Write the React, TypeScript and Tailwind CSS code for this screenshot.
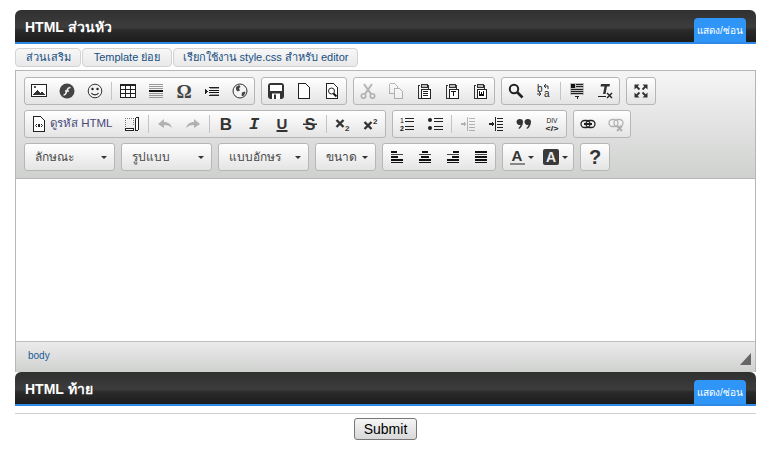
import React from "react";

const I = ({ children, off }: { children: React.ReactNode; off?: boolean }) => (
  <svg width="16" height="16" viewBox="0 0 16 16" className={off ? "opacity-30" : ""} shapeRendering="crispEdges">
    {children}
  </svg>
);

const Btn = ({ children, w = "w-[28px]" }: { children: React.ReactNode; w?: string }) => (
  <div className={`${w} h-[26px] flex items-center justify-center`}>{children}</div>
);

const Sep = () => (
  <div className="w-[5px] h-[26px] flex items-center justify-center">
    <div className="w-px h-[18px] bg-[#c4c4c4]" />
  </div>
);

const Group = ({ children }: { children: React.ReactNode }) => (
  <div className="flex h-[28px] border border-[#b6b6b6] rounded-[3px] bg-gradient-to-b from-[#ffffff] to-[#e4e4e4]">
    {children}
  </div>
);

const Caret = () => <span className="w-0 h-0 border-l-[3px] border-r-[3px] border-t-[3px] border-l-transparent border-r-transparent border-t-[#333]" />;

const Combo = ({ label, w }: { label: string; w: string }) => (
  <div className={`${w} flex items-center justify-between h-[28px] pl-[10px] pr-[7px] border border-[#b6b6b6] rounded-[3px] bg-gradient-to-b from-[#ffffff] to-[#e4e4e4]`}>
    <span className="text-[12px] text-[#484848]">{label}</span>
    <Caret />
  </div>
);

const Header = ({ title }: { title: string }) => (
  <div className="relative h-[34px] rounded-t-[6px] border-b-2 border-[#2e8ae6] bg-[linear-gradient(#303030_0%,#3c3c3c_50%,#3a3a3a_56%,#2b2b2b_62%,#1c1c1c_100%)] pl-[10px] flex items-center pt-[2px]">
    <span className="text-[14px] font-bold text-white">{title}</span>
    <div className="absolute right-[10px] bottom-0 w-[52px] h-[24px] bg-[#2f96f8] rounded-t-[4px] flex items-center justify-center text-[10px] text-white">
      แสดง/ซ่อน
    </div>
  </div>
);

const Tab = ({ w, children }: { w: string; children: React.ReactNode }) => (
  <div className={`${w} h-[19px] border border-[#d2d2d2] rounded-[4px] bg-gradient-to-b from-[#f7f7f7] to-[#e9e9e9] flex items-center justify-center text-[11px] text-[#174f82]`}>
    {children}
  </div>
);

const Lines = ({ ys, x = 2, w = 12 }: { ys: number[]; x?: number; w?: number }) => (
  <>
    {ys.map((y) => (
      <rect key={y} x={x} y={y} width={w} height={1} fill="#222" />
    ))}
  </>
);

const Clip = ({ children }: { children: React.ReactNode }) => (
  <>
    <path d="M4 2.500H2.500v12.500H5M5.500 1.500h5M11 2.500h1.500v3" fill="none" stroke="#333" />
    <rect x="5" y="1" width="6" height="3" fill="#bbb" stroke="#333" />
    <rect x="5" y="6" width="9" height="9" fill="#fff" stroke="#222" />
    {children}
  </>
);

const Txt = ({ children, cls }: { children: React.ReactNode; cls: string }) => <span className={cls}>{children}</span>;

const AlignRows = ({ a, b, c }: { a: [number, number]; b: [number, number]; c: [number, number] }) => (
  <I>
    <rect x={a[0]} y="2" width={a[1]} height="2" fill="#111" />
    <rect x="2" y="5" width="12" height="1" fill="#444" />
    <rect x={b[0]} y="7" width={b[1]} height="2" fill="#111" />
    <rect x="2" y="10" width="12" height="2" fill="#111" />
    <rect x={c[0]} y="13" width={c[1]} height="1" fill="#111" />
  </I>
);

export default function App() {
  return (
    <div className="w-[771px] h-[454px] bg-white overflow-hidden pt-[10px] px-[15px] font-['Liberation_Sans','Noto_Sans',sans-serif]">
      <div className="w-[741px]">
        <Header title="HTML ส่วนหัว" />
        <div className="flex gap-px mt-[4px] mb-[3px]">
          <Tab w="w-[66px]">ส่วนเสริม</Tab>
          <Tab w="w-[90px]">Template ย่อย</Tab>
          <Tab w="w-[185px]">เรียกใช้งาน style.css สำหรับ editor</Tab>
        </div>

        <div className="border border-[#b6b6b6] border-b-0">
          <div className="h-[108px] border-b border-[#b6b6b6] bg-gradient-to-b from-[#f5f5f5] to-[#cfd1cf] pt-[6px] pl-[8px] flex flex-col gap-[5px]">
            <div className="flex gap-[6px]">
              <Group>
                <Btn><I><rect x="0.5" y="1.500" width="15" height="12" fill="#fff" stroke="#222" /><path d="M2 12l4-5 3 3 2-2 3 4z" fill="#333" /><rect x="3" y="3" width="2" height="2" fill="#555" /></I></Btn>
                <Btn><svg width="16" height="16" viewBox="0 0 16 16"><circle cx="8" cy="8" r="7.500" fill="#444" /><path d="M4.500 12c2.500 0 2.500-1.500 3.500-4.500 0.500-2 1.500-3 3.500-3M6 8h4" fill="none" stroke="#eee" strokeWidth="1.500" /></svg></Btn>
                <Btn><svg width="16" height="16" viewBox="0 0 16 16"><circle cx="8" cy="8" r="6.800" fill="#f2f2f2" stroke="#333" /><circle cx="5.500" cy="6" r="1.200" fill="#222" /><circle cx="10.500" cy="6" r="1.200" fill="#222" /><path d="M4.500 10c1.500 2.500 5.500 2.500 7 0" fill="none" stroke="#222" strokeWidth="1.200" /></svg></Btn>
                <Sep />
                <Btn><I><rect x="0.5" y="1.500" width="15" height="13" fill="#fff" stroke="#222" /><rect x="0" y="1" width="16" height="2" fill="#222" /><path d="M5.500 3v11M10.500 3v11M1 6.500h14M1 10.500h14" stroke="#222" fill="none" /></I></Btn>
                <Btn><I><rect x="1" y="7" width="14" height="2" fill="#111" /><path d="M1 1.500h14M1 3.500h14M1 5.500h14M1 10.500h14M1 12.500h14M1 14.500h14" stroke="#999" fill="none" /></I></Btn>
                <Btn><Txt cls="font-['Liberation_Serif'] font-bold text-[19px] leading-none text-[#444]">Ω</Txt></Btn>
                <Btn><I><path d="M1 6l3 2.500L1 11z" fill="#222" /><Lines ys={[4, 12]} x={5} w={10} /><rect x="5" y="7" width="10" height="1" fill="#111" /><rect x="5" y="9" width="10" height="1" fill="#111" /><rect x="6" y="5" width="9" height="1" fill="#999" /><rect x="6" y="11" width="9" height="1" fill="#999" /></I></Btn>
                <Btn><svg width="16" height="16" viewBox="0 0 16 16"><circle cx="8" cy="8" r="7" fill="#f4f4f4" stroke="#333" /><path d="M4 4l3-2 1.500 1.500L7 5.500l1 2-2.500 1-1.500-2zM10 9.500l3-1 .5 1.500-2.500 3.500-1.500-1z" fill="#444" /></svg></Btn>
              </Group>
              <Group>
                <Btn><svg width="16" height="16" viewBox="0 0 16 16"><path d="M0 3a3 3 0 0 1 3-3h10a3 3 0 0 1 3 3v10a3 3 0 0 1-3 3H3a3 3 0 0 1-3-3z" fill="#333" /><rect x="2" y="2" width="12" height="6" fill="#fff" /><rect x="4" y="10.500" width="8" height="5.500" fill="#fff" /><rect x="6" y="11.500" width="2" height="4.500" fill="#333" /></svg></Btn>
                <Btn><I><path d="M2.500 0.500h7l4 4v11h-11z" fill="#fff" stroke="#222" /></I></Btn>
                <Btn><I><path d="M2.500 0.500h7l4 4v11h-11z" fill="#fff" stroke="#222" /><circle cx="7.500" cy="8" r="3" fill="#fff" stroke="#222" shapeRendering="auto" /><path d="M9.500 10.500l3 3" stroke="#111" strokeWidth="2" shapeRendering="auto" /></I></Btn>
              </Group>
              <Group>
                <Btn><svg width="16" height="16" viewBox="0 0 16 16" className="opacity-30"><path d="M4 1l7 10M12 1l-7 10" stroke="#222" strokeWidth="2" /><circle cx="3.500" cy="13" r="2.200" fill="none" stroke="#222" strokeWidth="1.500" /><circle cx="12.500" cy="13" r="2.200" fill="none" stroke="#222" strokeWidth="1.500" /></svg></Btn>
                <Btn><I off><path d="M1.500 0.500h5l3 3v3M1.500 0.500v10h4" fill="none" stroke="#222" /><path d="M6.500 5.500h5l3 3v7h-8z" fill="#fff" stroke="#222" /></I></Btn>
                <Btn><I><Clip><Lines ys={[8, 10, 12]} x={7} w={5} /></Clip></I></Btn>
                <Btn><I><Clip><path d="M7 8h5v1H10v4H9V9H7z" fill="#111" /></Clip></I></Btn>
                <Btn><I><Clip><path d="M7 8h1v3h1V9h1v2h1V8h1v5H7z" fill="#111" /></Clip></I></Btn>
              </Group>
              <Group>
                <Btn><svg width="16" height="16" viewBox="0 0 16 16"><circle cx="6" cy="6" r="4.200" fill="none" stroke="#222" strokeWidth="2" /><path d="M9 9l5.500 5.500" stroke="#222" strokeWidth="2.600" /></svg></Btn>
                <Btn><svg width="16" height="16" viewBox="0 0 16 16"><text x="1" y="9" fontSize="10" fontFamily="Liberation Sans" fill="#222">b</text><text x="8" y="14" fontSize="10" fontFamily="Liberation Sans" fill="#222">a</text><path d="M8 3h4v3M8 3l2-2M8 3l2 2M1 11h4M5 11l-2-2M5 11l-2 2" fill="none" stroke="#333" /></svg></Btn>
                <Sep />
                <Btn><I><rect x="1" y="0" width="14" height="12" fill="#bdbdbd" /><rect x="2" y="1" width="4" height="4" fill="#111" /><rect x="7" y="1" width="7" height="1" fill="#222" /><rect x="7" y="3" width="7" height="1" fill="#222" /><Lines ys={[6, 8, 10]} x={2} w={12} /><path d="M6 13h4v1H8.500v2h-1v-2H6z" fill="#222" /></I></Btn>
                <Btn><svg width="16" height="16" viewBox="0 0 16 16"><path d="M4 1h9l-.5 2.500H10L8.500 11H6l1.500-7.500H3.500z" fill="#333" /><rect x="1" y="13" width="8" height="1" fill="#222" /><path d="M10 10l5 5M15 10l-5 5" stroke="#222" strokeWidth="1.400" /></svg></Btn>
              </Group>
              <Group>
                <Btn><svg width="16" height="16" viewBox="0 0 16 16"><path d="M1.500 1.500h5l-5 5zM14.500 1.500v5l-5-5zM1.500 14.500v-5l5 5zM14.500 14.500h-5l5-5z" fill="#333" /><path d="M3 3l3.500 3.500M13 3L9.500 6.500M3 13l3.500-3.500M13 13L9.500 9.500" stroke="#333" strokeWidth="1.800" /></svg></Btn>
              </Group>
            </div>

            <div className="flex gap-[6px]">
              <Group>
                <div className="w-[93px] h-[26px] flex items-center pl-[6px] gap-[3px]">
                  <I><path d="M2.500 0.500h7l4 4v11h-11z" fill="#fff" stroke="#222" /><path d="M6 8L4.500 9.500 6 11M10 8l1.500 1.500L10 11" stroke="#222" fill="none" shapeRendering="auto" /><rect x="7" y="8" width="2" height="3" fill="#222" /></I>
                  <span className="text-[11.5px] text-[#484878]">ดูรหัส HTML</span>
                </div>
                <Btn><I><path d="M1 2h9M1 2v10M9 2v7" stroke="#777" strokeDasharray="1 1" fill="none" /><rect x="1.500" y="12.500" width="8" height="2" rx="1" fill="#fff" stroke="#222" /><rect x="11.500" y="1.500" width="3" height="13" rx="1.500" fill="#fff" stroke="#222" /></I></Btn>
                <Sep />
                <Btn><svg width="16" height="16" viewBox="0 0 16 16" className="opacity-30"><path d="M1 8l6-5v3c4 0 7 2 8 6-2-2-4-3-8-3v3z" fill="#222" /></svg></Btn>
                <Btn><svg width="16" height="16" viewBox="0 0 16 16" className="opacity-30"><path d="M15 8L9 3v3C5 6 2 8 1 12c2-2 4-3 8-3v3z" fill="#222" /></svg></Btn>
                <Sep />
                <Btn><Txt cls="font-bold text-[17px] text-[#333] leading-none">B</Txt></Btn>
                <Btn><Txt cls="font-['Liberation_Mono'] font-bold italic text-[17px] text-[#333] leading-none">I</Txt></Btn>
                <Btn>
                  <svg width="16" height="16" viewBox="0 0 16 16">
                    <text x="8" y="12.500" textAnchor="middle" fontSize="15" fontWeight="bold" fontFamily="Liberation Sans" fill="#333">U</text>
                    <rect x="2.500" y="14" width="11" height="2" fill="#333" />
                  </svg>
                </Btn>
                <Btn>
                  <svg width="16" height="16" viewBox="0 0 16 16">
                    <text x="8" y="14" textAnchor="middle" fontSize="16" fontWeight="bold" fontFamily="Liberation Sans" fill="#333">S</text>
                    <rect x="1" y="7.500" width="14" height="1.500" fill="#333" />
                  </svg>
                </Btn>
                <Sep />
                <Btn><svg width="16" height="16" viewBox="0 0 16 16"><path d="M1.500 4l7 7M8.500 4l-7 7" stroke="#333" strokeWidth="2.400" /><text x="10" y="15" fontSize="8" fontWeight="bold" fontFamily="Liberation Sans" fill="#333">2</text></svg></Btn>
                <Btn><svg width="16" height="16" viewBox="0 0 16 16"><path d="M1.500 6l7 7M8.500 6l-7 7" stroke="#333" strokeWidth="2.400" /><text x="10" y="8" fontSize="8" fontWeight="bold" fontFamily="Liberation Sans" fill="#333">2</text></svg></Btn>
              </Group>
              <Group>
                <Btn><svg width="16" height="16" viewBox="0 0 16 16"><text x="1" y="7" fontSize="7" fontFamily="Liberation Sans" fill="#111">1</text><text x="1" y="15" fontSize="7" fontWeight="bold" fontFamily="Liberation Sans" fill="#111">2</text><Lines ys={[2, 5, 10, 13]} x={6} w={9} /></svg></Btn>
                <Btn><svg width="16" height="16" viewBox="0 0 16 16"><circle cx="3" cy="4" r="2" fill="#222" /><circle cx="3" cy="12" r="2" fill="#222" /><Lines ys={[2, 5, 10, 13]} x={7} w={9} /></svg></Btn>
                <Sep />
                <Btn><I off><Lines ys={[2, 5, 8, 11, 14]} x={9} w={6} /><rect x="7" y="1" width="1" height="14" fill="#222" /><path d="M1 7h3V5l2 3-2 3V9H1z" fill="#222" /></I></Btn>
                <Btn><I><Lines ys={[2, 5, 8, 11, 14]} x={9} w={6} /><rect x="7" y="1" width="1" height="14" fill="#222" /><path d="M1 7h3V5l2 3-2 3V9H1z" fill="#222" /></I></Btn>
                <Btn><svg width="16" height="16" viewBox="0 0 16 16"><path d="M4 3a3 3 0 0 1 3 3c0 3-2 6-4 7l-.5-1c1-.6 1.800-2 2-3.200A3 3 0 1 1 4 3zM12 3a3 3 0 0 1 3 3c0 3-2 6-4 7l-.5-1c1-.6 1.800-2 2-3.200A3 3 0 1 1 12 3z" fill="#333" /></svg></Btn>
                <Btn><svg width="16" height="16" viewBox="0 0 16 16"><text x="8" y="7" textAnchor="middle" fontSize="8" textLength="11" lengthAdjust="spacingAndGlyphs" fontFamily="Liberation Sans" fill="#222">DIV</text><text x="8" y="15" textAnchor="middle" fontSize="8" textLength="13" lengthAdjust="spacingAndGlyphs" fontWeight="bold" fontFamily="Liberation Sans" fill="#222">{"</>"}</text></svg></Btn>
              </Group>
              <Group>
                <Btn><svg width="16" height="16" viewBox="0 0 16 16"><rect x="1" y="4.500" width="9" height="7" rx="3.500" fill="none" stroke="#222" strokeWidth="1.300" /><rect x="6" y="4.500" width="9" height="7" rx="3.500" fill="none" stroke="#222" strokeWidth="1.300" /><rect x="4" y="7" width="8" height="2" fill="#222" /></svg></Btn>
                <Btn><svg width="16" height="16" viewBox="0 0 16 16" className="opacity-30"><rect x="1" y="3.500" width="9" height="7" rx="3.500" fill="none" stroke="#222" strokeWidth="1.300" /><rect x="6" y="3.500" width="9" height="7" rx="3.500" fill="none" stroke="#222" strokeWidth="1.300" /><path d="M9 10l5 5M14 10l-5 5" stroke="#222" strokeWidth="1.800" /></svg></Btn>
              </Group>
            </div>

            <div className="flex gap-[6px]">
              <Combo label="ลักษณะ" w="w-[91px]" />
              <Combo label="รูปแบบ" w="w-[91px]" />
              <Combo label="แบบอักษร" w="w-[91px]" />
              <Combo label="ขนาด" w="w-[61px]" />
              <Group>
                <Btn><AlignRows a={[2, 6]} b={[2, 7]} c={[2, 12]} /></Btn>
                <Btn><AlignRows a={[5, 6]} b={[4, 8]} c={[2, 12]} /></Btn>
                <Btn><AlignRows a={[8, 6]} b={[7, 7]} c={[2, 12]} /></Btn>
                <Btn><AlignRows a={[2, 12]} b={[2, 12]} c={[2, 12]} /></Btn>
              </Group>
              <Group>
                <Btn w="w-[35px]">
                  <div className="flex items-center gap-[3px] pl-[2px]">
                    <div className="flex flex-col items-center w-[15px]">
                      <span className="font-bold text-[15px] leading-[13px] text-[#333]">A</span>
                      <span className="w-[15px] h-[2px] bg-[#888] mt-px" />
                    </div>
                    <Caret />
                  </div>
                </Btn>
                <Btn w="w-[35px]">
                  <div className="flex items-center gap-[3px]">
                    <span className="w-[16px] h-[16px] bg-[#3a3a3a] rounded-[2px] flex items-center justify-center font-bold text-[14px] leading-none text-[#eee]">A</span>
                    <Caret />
                  </div>
                </Btn>
              </Group>
              <Group>
                <Btn><Txt cls="font-bold text-[20px] leading-none text-[#333]">?</Txt></Btn>
              </Group>
            </div>
          </div>

          <div className="h-[162px] bg-white" />

          <div className="relative h-[31px] border-t border-[#bfbfbf] bg-gradient-to-b from-[#ebebeb] to-[#cfd1cf] pl-[12px] pt-[6px] text-[10px] leading-[16px] text-[#1b5a96]">
            body
            <svg width="11" height="12" viewBox="0 0 11 12" className="absolute right-[4px] bottom-[7px]"><path d="M11 0v12H0z" fill="#666" /></svg>
          </div>
        </div>

        <Header title="HTML ท้าย" />
        <div className="mt-[7px] h-px bg-[#cfcfcf]" />
        <div className="flex justify-center mt-[4px]">
          <button className="w-[63px] h-[22px] border border-[#777] rounded-[3px] bg-gradient-to-b from-[#f6f6f6] to-[#d8d8d8] text-[14px] leading-none text-black">
            Submit
          </button>
        </div>
      </div>
    </div>
  );
}
